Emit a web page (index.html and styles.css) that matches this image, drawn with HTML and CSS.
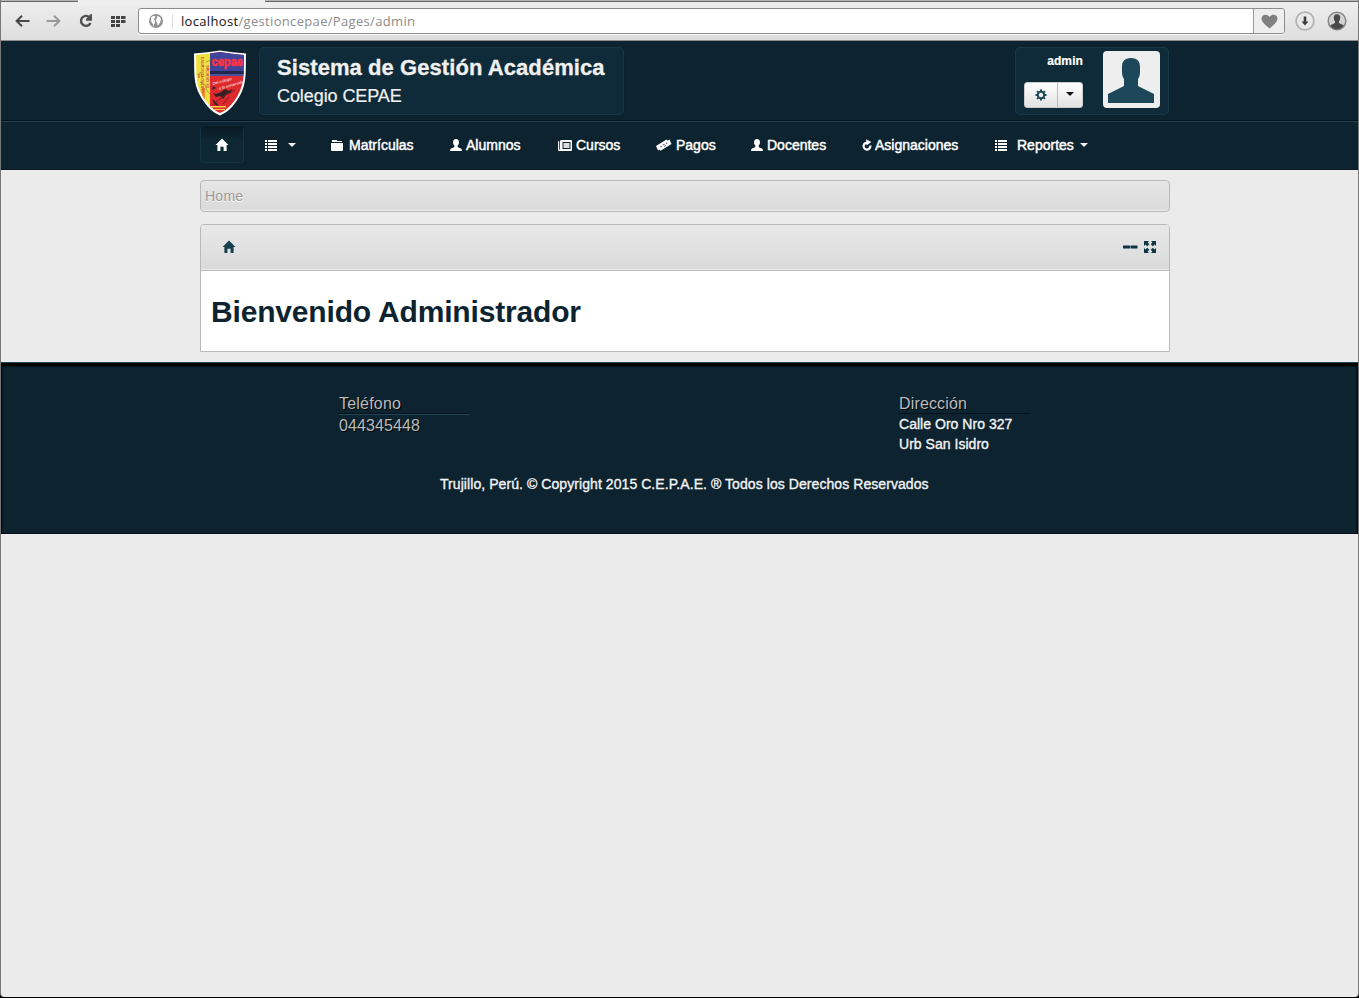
FILE: index.html
```html
<!DOCTYPE html>
<html lang="es">
<head>
<meta charset="utf-8">
<title>Sistema de Gestión Académica</title>
<link rel="stylesheet" href="styles.css">
</head>
<body>
<svg class="defs" width="0" height="0">
  <symbol id="home" viewBox="0 0 14 14"><path d="M7 0.500 13.500 7H11.600V13H8.600V8.800H5.400V13H2.400V7H0.500Z"/></symbol>
  <symbol id="list" viewBox="0 0 12 11"><path d="M0 0h2v2H0zM3 0h9v2H3zM0 3h2v2H0zM3 3h9v2H3zM0 6h2v2H0zM3 6h9v2H3zM0 9h2v2H0zM3 9h9v2H3z"/></symbol>
  <symbol id="folder" viewBox="0 0 12 11"><path d="M1 0h4.500l1 1H11v1H1zM0 3h12v7.200L11.200 11H.8L0 10.200z"/></symbol>
  <symbol id="user" viewBox="0 0 12 12"><path d="M6 0C8 0 9 1.400 9 3.200 9 5 8.300 5.800 7.700 6.600c-.3.800 0 1.400.6 1.800L11 9.500q1 .5 1 2.500H0q0-2 1-2.500L3.700 8.400c.6-.4.900-1 .6-1.800C3.700 5.800 3 5 3 3.200 3 1.400 4 0 6 0Z"/></symbol>
  <symbol id="news" viewBox="0 0 14 11"><path fill-rule="evenodd" d="M3.500 0H13q1 0 1 1v9q0 1-1 1H1.500Q0 11 0 9.500V2q0-1 1-1v8.500h.8V1.500Q2 0 3.500 0ZM4.500 2v7h8V2z"/><path opacity=".85" d="M5.500 3h6v5h-6z"/></symbol>
  <symbol id="ticket" viewBox="0 0 16 12"><path d="M0 7 10.500.5l1.200 1.200 1.800-1.200L15.500 5 4.500 11.800 3.300 10.600 2 11.500z"/><g fill="#0d2430"><circle cx="5" cy="7.500" r=".6"/><circle cx="10.700" cy="4.200" r=".6"/><path d="m6.500 6 2-1.200.3.500-2 1.200zM8 7.300l2-1.200.3.500-2 1.200z"/></g></symbol>
  <symbol id="refresh" viewBox="0 0 10 12"><path d="M6 3.900A3.400 3.400 0 1 0 8.300 6.500" fill="none" stroke="currentColor" stroke-width="2.200"/><path d="M4.200.3 9.300 3.100 4.500 6.600z"/></symbol>
</svg>

<div class="window">
  <div class="browser">
    <div class="tabs"><i></i><i></i><i></i></div>
    <div class="toolbar">
      <svg class="t-back" width="15" height="12" viewBox="0 0 15 12" fill="none" stroke="#484848" stroke-width="2"><path d="M14.500 6H2M7 .7 1.600 6 7 11.300"/></svg>
      <svg class="t-fwd" width="15" height="12" viewBox="0 0 15 12" fill="none" stroke="#999" stroke-width="2"><path d="M.5 6H13M8 .7 13.400 6 8 11.300"/></svg>
      <svg class="t-reload" width="14" height="14" viewBox="0 0 14 14"><path d="M10.500 3.300A5 5 0 1 0 11.500 9" fill="none" stroke="#505050" stroke-width="2.400"/><path fill="#505050" d="M13 0v6.700H7V4.900L11.200.5z"/></svg>
      <svg class="t-grid" width="15" height="11" viewBox="0 0 15 11" fill="#444"><path d="M0 0h4v3H0zM5 0h4v3H5zM10 0h4.500v3H10zM0 4h4v3H0zM5 4h4v3H5zM10 4h4.500v3H10zM0 8h4v3H0zM5 8h4v3H5z"/></svg>
      <div class="address">
        <svg width="14" height="14" viewBox="0 0 14 14"><circle cx="7" cy="7" r="7" fill="#929292"/><path fill="#fff" d="M2 3.500 4 2l2.500.2L6 4 4.500 5 6 6.500 6.200 8.500 5 10.500v2L3.500 9.500 2 7.200zM8 2l2.500.7L12 5l-.7 3-1.800 3H8.500L8 8.500 7 7V5L8.300 4z"/></svg>
        <span class="url"><b>localhost</b>/gestioncepae/Pages/admin</span>
        <span class="heart"><svg width="17" height="15" viewBox="0 0 17 15"><path fill="#808080" d="M8.500 14.500C5 11.500.5 8.300.5 4.600.5.200 6.300-.9 8.500 3.100 10.700-.9 16.500.200 16.500 4.600c0 3.700-4.500 6.900-8 9.900Z"/></svg></span>
      </div>
      <svg class="t-down" width="20" height="20" viewBox="0 0 20 20"><circle cx="10" cy="10" r="8.900" fill="#e9e9e9" stroke="#b3b3b3" stroke-width="1.800"/><path fill="#3c3c3c" d="M8.700 5.500h2.600v5h2.200L10 14.500 6.500 10.500h2.200z"/></svg>
      <svg class="t-user" width="20" height="20" viewBox="0 0 20 20"><circle cx="10" cy="10" r="8.800" fill="#d2d2d2" stroke="#858585" stroke-width="1.500"/><path fill="#484848" d="M10 3.200c2.500 0 3.500 1.700 3.200 4-.2 1.800-.9 2.800-1.400 3.800 0 1.700 2.800 2 5 3.300Q14.500 18.300 10 18.300T3.200 14.300c2.200-1.300 5-1.600 5-3.300C7.700 10 7 9 6.800 7.200c-.3-2.300.7-4 3.200-4Z"/></svg>
    </div>
  </div>

  <header class="header">
    <div class="wrap head">
      <svg class="logo" width="54" height="66" viewBox="0 0 54 66">
        <defs><clipPath id="shield"><path d="M3 5Q15 4 27 2q12 2 24 3c-.5 18 1 27-6 40C40 54 34 60 27 63 20 60 14 54 9 45 2 32 3.500 23 3 5Z"/></clipPath></defs>
        <path fill="#fff" d="M1 3.500Q15 2.500 27 .5q12 2 26 3c-.5 19 1 29-6 42C41 56 35 62 27 65.500 19 62 13 56 7 45.500 0 32.500 1.500 22.500 1 3.500Z"/>
        <g clip-path="url(#shield)">
          <path fill="#eee13e" d="M0 0h18v66H0z"/><path fill="#de292e" d="M17 0h37v66H17z"/>
          <path fill="#40459b" d="M17 0h37v21H17z"/><path fill="#22264a" d="M17 21h37v3H17z"/><path fill="#4a51a0" d="M17 24h37v2H17z"/>
          <path fill="#e98b2d" d="M9 38h3v11H9zM5 24h2v4H5z"/>
          <path fill="none" stroke="#8f9442" stroke-width=".8" d="m4 25 4-3 1 6M13 12l5-2M7 32l5 3 2 6 3 3"/>
          <path fill="#352024" d="m28 42 4-3 4 2 3-2-1 4-5 2-3 4-3-3-4 1-3-4 3 1zM19 49l4 3 3 4-4-1zM20 36l3 2-4 2z"/>
          <path fill="none" stroke="#772029" d="m19 55 15-11 8-4M30 54l6-7"/>
          <path fill="#f4d044" d="M18 56h15v1.500H18zM20 59h12v1H20z"/>
          <g class="logo-text"><text x="18.500" y="16" font-size="12" font-weight="700" textLength="31.500" lengthAdjust="spacingAndGlyphs" fill="#ff3340" stroke="#ff3340" stroke-width=".6">cepae</text>
          <text transform="translate(11 43) rotate(-90)" font-size="3.500" font-weight="700" fill="#ce4650">CENTRO EDUCATIVO</text>
          <text transform="translate(16 38) rotate(-90)" font-size="3.500" font-weight="700" fill="#ce4650">DE CIENCIAS</text>
          <text transform="translate(20 35) rotate(-15)" font-size="4" font-style="italic" fill="#fff">Del colegio</text>
          <text transform="translate(26 40) rotate(-16)" font-size="4" font-style="italic" fill="#fff">a la universidad</text></g>
        </g>
      </svg>
      <div class="panel title"><h1>Sistema de Gestión Académica</h1><h2>Colegio CEPAE</h2></div>
      <div class="panel account">
        <div class="controls"><strong>admin</strong>
          <div class="buttons"><span><svg width="12" height="12" viewBox="0 0 12 12"><circle cx="6" cy="6" r="3.200" fill="none" stroke="#1b485b" stroke-width="2"/><path stroke="#1b485b" stroke-width="2" d="M6 .5V2M6 10v1.500M.5 6H2M10 6h1.500M2.100 2.100l1.100 1.100M8.800 8.800l1.100 1.100M2.100 9.900l1.100-1.100M8.800 3.200l1.100-1.100"/></svg></span><span><i class="caret dark"></i></span></div>
        </div>
        <svg class="avatar" width="57" height="57" viewBox="0 0 57 57"><rect width="57" height="57" rx="4" fill="#eee"/><path fill="#1d485a" d="M28 7c6.500 0 9 3.500 9 9v5c0 3-.8 5.500-2 7v7q7 3.500 16 8v9H5v-9q9-4.500 16-8v-7c-1.200-1.500-2-4-2-7v-5c0-5.500 2.500-9 9-9Z"/></svg>
      </div>
    </div>
  </header>
  <nav class="nav">
    <div class="wrap menu">
      <a class="active"><svg width="14" height="14"><use href="#home"/></svg></a>
      <a><svg width="12" height="11"><use href="#list"/></svg><i class="caret lone"></i></a>
      <a><svg width="12" height="11"><use href="#folder"/></svg><span class="matriculas">Matrículas</span></a>
      <a><svg width="12" height="12"><use href="#user"/></svg><span>Alumnos</span></a>
      <a><svg width="14" height="11"><use href="#news"/></svg><span>Cursos</span></a>
      <a><svg width="16" height="12"><use href="#ticket"/></svg><span>Pagos</span></a>
      <a><svg width="12" height="12"><use href="#user"/></svg><span>Docentes</span></a>
      <a><svg width="10" height="12"><use href="#refresh"/></svg><span class="asignaciones">Asignaciones</span></a>
      <a><svg width="12" height="11"><use href="#list"/></svg><span class="reportes">Reportes</span><i class="caret"></i></a>
    </div>
  </nav>

  <main class="wrap">
    <div class="breadcrumb">Home</div>
    <section class="box">
      <div class="box-head">
        <svg width="14" height="14"><use href="#home"/></svg>
        <div class="tools"><svg width="15" height="4" viewBox="0 0 15 4"><path d="M0 .5h7v3H0zM7.500.5h7v3h-7z"/></svg><svg width="12" height="12" viewBox="0 0 12 12"><path d="M0 0h5L3.600 1.500 5.300 3.200 3.200 5.300 1.500 3.600 0 5zM7 0h5v5l-1.500-1.400-1.700 1.700-2.100-2.100 1.700-1.700zM0 7l1.500 1.400 1.700-1.700 2.100 2.100-1.700 1.700L5 12H0zM12 7v5H7l1.400-1.500-1.700-1.700 2.100-2.100 1.700 1.700z"/></svg></div>
      </div>
      <div class="box-body"><h3>Bienvenido Administrador</h3></div>
    </section>
  </main>

  <footer class="footer">
    <div class="contacts">
      <div><h4>Teléfono</h4><p class="phone">044345448</p></div>
      <div><h4 class="plain">Dirección</h4><p>Calle Oro Nro 327<br>Urb San Isidro</p></div>
    </div>
    <p class="copyright"><span>Trujillo, Perú. © Copyright 2015 C.E.P.A.E. ® Todos los Derechos Reservados</span></p>
  </footer>
</div>
</body>
</html>
```
FILE: styles.css
```css
* { box-sizing: border-box; }
body { margin: 0; background: #000; font-family: "Liberation Sans", Arial, sans-serif; font-size: 14px; line-height: 20px; }
h1, h2, h3, h4, p { margin: 0; font-weight: normal; white-space: nowrap; }
svg { display: block; flex: none; }
.defs { position: absolute; }
.window { height: 997px; background: #ebebeb; border: 1px solid #777; border-width: 0 1px 0 1px; border-radius: 0 0 4px 4px; overflow: hidden; }
.wrap { width: 970px; margin-left: 199px; }

.browser { height: 41px; background: linear-gradient(#efefef, #dedede); border-bottom: 1px solid #8e8e8e; }
.tabs { height: 2px; display: grid; grid-template-columns: 77px 187px 1fr; }
.tabs i { background: #b5b5b3; border-bottom: 1px solid #666; }
.tabs i:nth-child(2) { background: #ededed; border: 0; }
.toolbar { height: 38px; display: flex; align-items: center; padding: 0 11px 0 14px; }
.t-fwd { margin-left: 16px; }
.t-reload { margin-left: 18px; }
.t-grid { margin-left: 18px; }
.address { display: flex; align-items: center; width: 1147px; height: 26px; margin-left: 12px; padding-left: 10px; border: 1px solid #8c8c8c; border-radius: 3px; background: #fff; box-shadow: 0 1px #f8f8f8; }
.url { margin-left: 9px; padding-left: 8px; border-left: 1px solid #ddd; color: #8b8b8b; font: 13px/15px "Open Sans", "Noto Sans", sans-serif; letter-spacing: .33px; }
.url b { color: #111; font-weight: normal; }
.heart { display: grid; place-items: center; width: 31px; height: 24px; margin-left: auto; background: #eee; border-left: 1px solid #999; border-radius: 0 2px 2px 0; }
.t-down { margin-left: 10px; }
.t-user { margin-left: 12px; }

.header { height: 80px; background: #0d2430; border-bottom: 1px solid #04131b; }
.head { display: flex; padding-top: 6px; }
.logo { margin: 3px 0 0 -7px; }
.logo-text { font-family: "Liberation Sans", sans-serif; }
.panel { height: 68px; background: #0f2b39; border: 1px solid #143847; border-radius: 4px; box-shadow: 0 0 1px #02131d; }
.title { width: 365px; margin-left: 12px; padding: 7px 0 0 17px; color: #f0f0f0; }
.title h1 { font-size: 22px; line-height: 26px; font-weight: bold; -webkit-text-stroke: .3px; letter-spacing: .07px; }
.title h2 { font-size: 18px; line-height: 30px; -webkit-text-stroke: .2px; letter-spacing: -.08px; }
.account { display: flex; width: 154px; margin-left: auto; margin-right: 1px; padding: 3px 8px; }
.controls { width: 59px; margin-right: 20px; }
.controls strong { display: block; color: #fff; text-align: right; font-size: 12px; line-height: 20px; letter-spacing: .1px; -webkit-text-stroke: .2px; }
.buttons { display: flex; height: 26px; margin-top: 11px; border-radius: 3px; overflow: hidden; background: linear-gradient(#fff, #e2e2e2); border: 1px solid #ccc; }
.buttons span { display: grid; place-items: center; width: 33px; }
.buttons span + span { width: 25px; border-left: 1px solid #bbb; }
.caret { border: 4px solid transparent; border-top-color: #eee; border-bottom: 0; margin-left: 6px; }
.caret.lone { margin-left: 11px; }
.caret.dark { border-top-color: #111; margin: 0 0 2px; }

.nav { height: 49px; background: #0d2430; border-top: 1px solid #214252; border-bottom: 1px solid #0a1b25; }
.menu { display: grid; grid-template-columns: 65px 66px 119px 108px 98px 95px 111px 133px 110px; padding-top: 5px; color: #fff; fill: currentColor; }
.menu a { display: flex; align-items: center; height: 36px; -webkit-text-stroke: .45px; white-space: nowrap; }
.menu span { margin-left: 4px; padding-bottom: 1px; }
.menu .matriculas { margin-left: 6px; }
.menu .asignaciones { margin-left: 3px; }
.menu .reportes { margin-left: 10px; }
.menu .active { width: 44px; justify-content: center; padding-right: 1px; border: 1px solid #123444; border-top-color: #071820; border-radius: 4px; background: linear-gradient(#091c26, #0d2733 35%); }

.breadcrumb { height: 32px; margin-top: 10px; padding: 0 4px; line-height: 30px; border: 1px solid #b8baba; border-radius: 4px; background: linear-gradient(#e6e6e6, #dadada); color: #999; text-shadow: 0 1px #fff; box-shadow: inset 0 -1px #ebebeb; font-size: 14px; letter-spacing: .25px; }
.box { margin-top: 12px; height: 128px; border: 1px solid #b8baba; border-radius: 4px 4px 0 0; background: #fff; color: #183f50; fill: currentColor; overflow: hidden; }
.box-head { height: 46px; display: flex; align-items: center; justify-content: space-between; padding: 0 13px 1px 21px; background: linear-gradient(#e8e8e8, #dadada); border-bottom: 1px solid #b8baba; box-shadow: inset 0 -1px #ececec; }
.tools { display: flex; align-items: center; gap: 6px; color: #0f3444; fill: currentColor; }
.box-body { padding: 20px 10px; color: #0d2430; }
.box-body h3 { font-size: 30px; line-height: 41px; font-weight: bold; letter-spacing: -.17px; }

.footer { height: 172px; margin-top: 10px; padding-top: 31px; background: #0d2430; border-top: 1px solid #1c485b; box-shadow: inset 0 3px #000, inset 0 4px 1px #04131b, inset 1px 0 2px #000, inset -1px 0 2px #000; color: #f3f3f3; }
.contacts { display: grid; grid-template-columns: 560px 200px; padding-left: 338px; height: 80px; -webkit-text-stroke: .35px; }
.contacts h4 { width: 131px; height: 21px; color: #bbb; font-size: 16px; line-height: 20px; border-bottom: 1px solid #1d4658; text-shadow: 1px 1px #000; -webkit-text-stroke: 0; box-shadow: inset 0 -1px #04131b; letter-spacing: .2px; }
.contacts .plain { border-bottom: 1px solid #04131b; height: 20px; box-shadow: none; letter-spacing: .15px; }
.contacts p { letter-spacing: .03px; }
.contacts .phone { color: #bbb; font-size: 16px; line-height: 22px; text-shadow: 1px 1px #000; -webkit-text-stroke: 0; letter-spacing: .1px; }
.copyright { padding-left: 439px; -webkit-text-stroke: .35px; letter-spacing: .07px; }
```
